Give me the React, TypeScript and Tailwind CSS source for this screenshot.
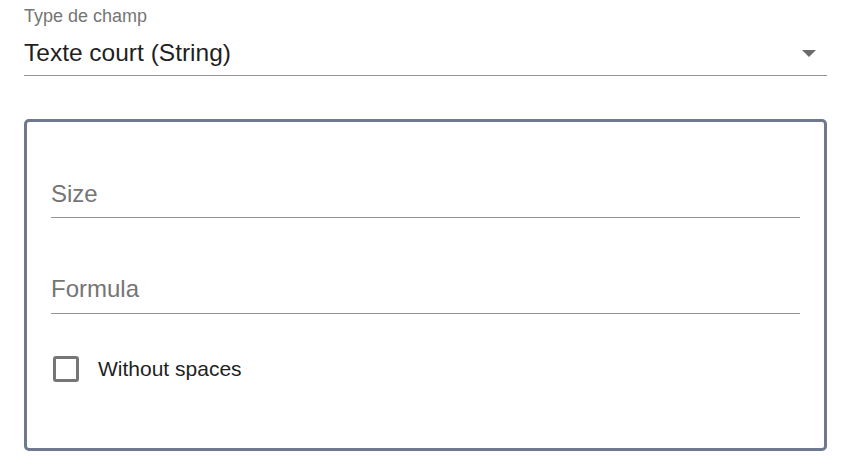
export default function App() {
	return (
		<div className="h-[468px] w-[848px] bg-white pl-[24px] pr-[21px] font-['Liberation_Sans',Arial,sans-serif]">
			<div className="flex flex-col">
				<label className="pt-[6px] text-[18px] leading-[20px] text-[#757575]">Type de champ</label>
				<div className="mt-[13px] flex items-center justify-between border-b border-[#949494] pb-[8px]">
					<span className="text-[24.5px] leading-[28px] text-[#1f1f1f]">Texte court (String)</span>
					<div className="mr-[11px] h-0 w-0 border-x-[7px] border-t-[7px] border-x-transparent border-t-[#6b6b6b]" />
				</div>
			</div>

			<div className="mt-[43px] h-[332px] rounded-[5px] border-[3px] border-[#6e7990] px-[24px]">
				<div className="mt-[58px] border-b border-[#949494] pb-[9px] text-[24px] leading-[28px] text-[#757575]">Size</div>
				<div className="mt-[57px] border-b border-[#949494] pb-[10px] text-[24px] leading-[28px] text-[#757575]">Formula</div>
				<label className="mt-[42px] flex items-center">
					<span className="ml-[2px] h-[26px] w-[26px] rounded-[3px] border-[3px] border-[#767676]" />
					<span className="ml-[19px] text-[21px] leading-[24px] text-[#1f1f1f]">Without spaces</span>
				</label>
			</div>
		</div>
	);
}
